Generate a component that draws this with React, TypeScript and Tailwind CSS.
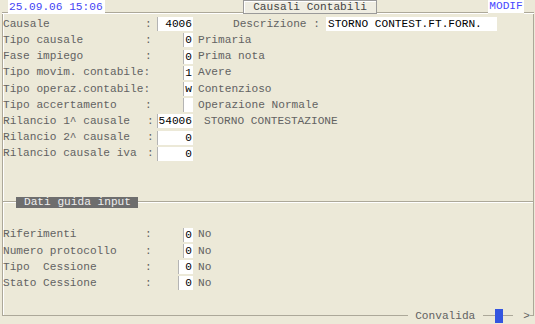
import React from "react";

const HLine = ({ className }: { className: string }) => (
  <div className={`h-[2px] border-t border-[#aca899] bg-white ${className}`} />
);

const Field = ({ className, children }: { className: string; children?: React.ReactNode }) => (
  <div
    className={`h-[14px] shrink-0 whitespace-pre border-l border-[#b4b4b4] bg-white pr-[1px] text-right leading-[14px] text-black ${className}`}
  >
    {children}
  </div>
);

const Row = ({ children }: { children?: React.ReactNode }) => (
  <div className="flex h-[16.2px] shrink-0 items-center whitespace-pre">{children}</div>
);

export default function App() {
  return (
    <div className="flex h-[324px] w-[535px] flex-col overflow-hidden bg-[#ece9d8] font-['Liberation_Mono',monospace] text-[11.15px] text-[#626262]">
      {/* header */}
      <div className="relative z-10 flex h-[16.2px] shrink-0 items-start">
        <div className="w-[2px] shrink-0" />
        <HLine className="mt-[12px] w-[6px] shrink-0" />
        <div className="h-[14px] w-[97px] shrink-0 bg-white pl-[1px] leading-[14px] text-[#4444f4]">25.09.06 15:06</div>
        <HLine className="mt-[12px] w-[138px] shrink-0" />
        <div className="h-[14px] w-[134px] shrink-0 border border-[#9a9a9a] bg-[#efede2] text-center leading-[12px] text-[#444444] shadow-[inset_1px_1px_0_#ffffff]">
          Causali Contabili
        </div>
        <HLine className="mt-[12px] w-[111px] shrink-0" />
        <div className="h-[13px] w-[36px] shrink-0 bg-white text-center leading-[13px] text-[#4848ff]">MODIF</div>
        <HLine className="mt-[12px] w-[10px] shrink-0" />
        <div className="w-[1px] shrink-0" />
      </div>

      {/* body frame */}
      <div className="-mt-[4.2px] ml-[2px] flex h-[304px] w-[532px] shrink-0 flex-col border-b border-l border-r border-[#aca899] pt-[4.2px] shadow-[inset_1px_0_0_#ffffff]">
        <Row>
          <span className="w-[142px] shrink-0">Causale</span>
          <span className="w-[12px] shrink-0">:</span>
          <Field className="w-[36px]">4006</Field>
          <span className="ml-[40px] w-[93px] shrink-0">Descrizione :</span>
          <div className="h-[14px] w-[171px] shrink-0 bg-white pl-[2px] leading-[14px] text-black">STORNO CONTEST.FT.FORN.</div>
        </Row>
        <Row>
          <span className="w-[142px] shrink-0">Tipo causale</span>
          <span className="w-[38px] shrink-0">:</span>
          <Field className="w-[10px]">0</Field>
          <span className="ml-[5px]">Primaria</span>
        </Row>
        <Row>
          <span className="w-[142px] shrink-0">Fase impiego</span>
          <span className="w-[38px] shrink-0">:</span>
          <Field className="w-[10px]">0</Field>
          <span className="ml-[5px]">Prima nota</span>
        </Row>
        <Row>
          <span className="w-[180px] shrink-0">Tipo movim. contabile:</span>
          <Field className="w-[10px]">1</Field>
          <span className="ml-[5px]">Avere</span>
        </Row>
        <Row>
          <span className="w-[180px] shrink-0">Tipo operaz.contabile:</span>
          <Field className="w-[10px]">w</Field>
          <span className="ml-[5px]">Contenzioso</span>
        </Row>
        <Row>
          <span className="w-[142px] shrink-0">Tipo accertamento</span>
          <span className="w-[38px] shrink-0">:</span>
          <Field className="w-[10px]"></Field>
          <span className="ml-[5px]">Operazione Normale</span>
        </Row>
        <Row>
          <span className="w-[144px] shrink-0">Rilancio 1^ causale</span>
          <span className="w-[10px] shrink-0">:</span>
          <Field className="w-[36px]">54006</Field>
          <span className="ml-[11px]">STORNO CONTESTAZIONE</span>
        </Row>
        <Row>
          <span className="w-[144px] shrink-0">Rilancio 2^ causale</span>
          <span className="w-[10px] shrink-0">:</span>
          <Field className="w-[36px]">0</Field>
        </Row>
        <Row>
          <span className="w-[144px] shrink-0">Rilancio causale iva</span>
          <span className="w-[10px] shrink-0">:</span>
          <Field className="w-[36px]">0</Field>
        </Row>
        <Row />
        <Row />
        <Row>
          <HLine className="w-[13px] shrink-0" />
          <div className="h-[11px] w-[122px] shrink-0 bg-[#6e6e6e] pl-[8px] leading-[11px] text-[#eeeeee]">Dati guida input</div>
          <HLine className="flex-1" />
        </Row>
        <Row />
        <Row>
          <span className="w-[142px] shrink-0">Riferimenti</span>
          <span className="w-[38px] shrink-0">:</span>
          <Field className="w-[10px]">0</Field>
          <span className="ml-[5px]">No</span>
        </Row>
        <Row>
          <span className="w-[142px] shrink-0">Numero protocollo</span>
          <span className="w-[38px] shrink-0">:</span>
          <Field className="w-[10px]">0</Field>
          <span className="ml-[5px]">No</span>
        </Row>
        <Row>
          <span className="w-[142px] shrink-0">Tipo  Cessione</span>
          <span className="w-[33px] shrink-0">:</span>
          <Field className="w-[15px]">0</Field>
          <span className="ml-[5px]">No</span>
        </Row>
        <Row>
          <span className="w-[142px] shrink-0">Stato Cessione</span>
          <span className="w-[33px] shrink-0">:</span>
          <Field className="w-[15px]">0</Field>
          <span className="ml-[5px]">No</span>
        </Row>
      </div>

      {/* footer on the frame line */}
      <div className="-mt-[8.6px] flex h-[16.2px] shrink-0 items-center justify-end">
        <span className="bg-[#ece9d8] pl-[7px] pr-[8px] leading-[14px]">Convalida</span>
        <div className="w-[12px] shrink-0" />
        <div className="h-[14px] w-[8px] shrink-0 bg-[#3355e0]" />
        <div className="w-[10px] shrink-0" />
        <span className="bg-[#ece9d8] pl-[10px] leading-[14px]">&gt;</span>
        <div className="w-[5px] shrink-0" />
      </div>
    </div>
  );
}
